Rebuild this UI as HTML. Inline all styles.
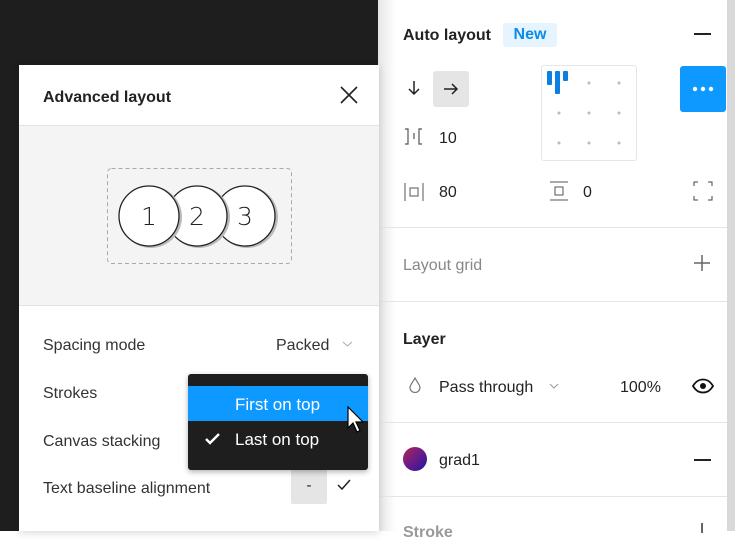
<!DOCTYPE html>
<html><head><meta charset="utf-8"><style>
*{box-sizing:border-box;margin:0;padding:0}
body{width:735px;height:531px;overflow:hidden;position:relative;background:#fff;font-family:"Liberation Sans",sans-serif;color:#222}
.abs{position:absolute}
.t{position:absolute;font-size:16px;white-space:nowrap;margin-top:2px}
.b{font-weight:bold}
.hr{position:absolute;left:378px;width:349px;height:1px;background:#e5e5e5}
</style></head><body>
<div class="abs" style="left:0;top:0;width:378px;height:531px;background:#1e1e1e"></div>
<div class="abs" style="left:378px;top:0;width:18px;height:531px;background:linear-gradient(90deg,#e6e6e6,#fff)"></div>
<div class="abs" style="left:727px;top:0;width:8px;height:531px;background:#d9d9d9"></div>

<!-- right panel -->
<div class="t b" style="left:403px;top:25px;font-size:16px">Auto layout</div>
<div class="abs" style="left:503px;top:23px;width:54px;height:24px;background:#e5f4ff;border-radius:3px;color:#0d8ce9;font-weight:bold;font-size:16px;text-align:center;line-height:24px">New</div>
<div class="abs" style="left:694px;top:33px;width:17px;height:1.5px;background:#222"></div>
<svg class="abs" style="left:407px;top:80px" width="14" height="16" stroke="#222" fill="none" stroke-width="1.5"><path d="M7 1v13M2 9l5 5 5-5"/></svg>
<div class="abs" style="left:433px;top:71px;width:36px;height:36px;background:#e5e5e5;border-radius:3px"></div>
<svg class="abs" style="left:443px;top:82px" width="16" height="14" stroke="#222" fill="none" stroke-width="1.5"><path d="M1 7h13M9 2l5 5-5 5"/></svg>
<div class="abs" style="left:541px;top:65px;width:96px;height:96px;border:1px solid #e5e5e5;border-radius:3px">
<div class="abs" style="left:5px;top:5px;width:5px;height:14px;background:#0d7fe0;border-radius:1px"></div>
<div class="abs" style="left:13px;top:5px;width:5px;height:23px;background:#0d7fe0;border-radius:1px"></div>
<div class="abs" style="left:21px;top:5px;width:5px;height:10px;background:#0d7fe0;border-radius:1px"></div>
<svg class="abs" style="left:0;top:0" width="96" height="96" fill="#bbb"><circle cx="47" cy="17" r="1.5"/><circle cx="77" cy="17" r="1.5"/><circle cx="17" cy="47" r="1.5"/><circle cx="47" cy="47" r="1.5"/><circle cx="77" cy="47" r="1.5"/><circle cx="17" cy="77" r="1.5"/><circle cx="47" cy="77" r="1.5"/><circle cx="77" cy="77" r="1.5"/></svg>
</div>
<div class="abs" style="left:680px;top:66px;width:46px;height:46px;background:#0d99ff;border-radius:3px"><svg width="46" height="46" fill="#fff"><circle cx="15" cy="23" r="2.2"/><circle cx="23" cy="23" r="2.2"/><circle cx="31" cy="23" r="2.2"/></svg></div>
<svg class="abs" style="left:404px;top:128px" width="20" height="18" stroke="#555" fill="none" stroke-width="1.2"><path d="M1 1h3v15H1M10 5v6M18 1h-3v15h3"/></svg>
<div class="t" style="left:439px;top:128px">10</div>
<svg class="abs" style="left:404px;top:182px" width="20" height="20" stroke="#555" fill="none"><path d="M1 1v18M19 1v18M6 6h8v8H6z"/></svg>
<div class="t" style="left:439px;top:182px">80</div>
<svg class="abs" style="left:549px;top:181px" width="20" height="20" stroke="#555" fill="none"><path d="M1 1h18M1 19h18M6 6h8v8H6z"/></svg>
<div class="t" style="left:583px;top:182px">0</div>
<svg class="abs" style="left:693px;top:181px" width="20" height="20" stroke="#444" fill="none"><path d="M1 5V1h4M15 1h4v4M19 15v4h-4M5 19H1v-4"/></svg>
<div class="hr" style="top:227px"></div>
<div class="t" style="left:403px;top:255px;color:#888">Layout grid</div>
<svg class="abs" style="left:693px;top:254px" width="18" height="18" stroke="#666" stroke-width="1.5"><path d="M9 1v16M1 9h16"/></svg>
<div class="hr" style="top:301px"></div>
<div class="t b" style="left:403px;top:329px">Layer</div>
<svg class="abs" style="left:409px;top:377px" width="12" height="16" stroke="#777" fill="none" stroke-width="1.2"><path d="M6 1C4 5 1 8 1 10.5a5 5 0 0 0 10 0C11 8 8 5 6 1z"/></svg>
<div class="t" style="left:439px;top:377px">Pass through</div>
<svg class="abs" style="left:549px;top:382px" width="10" height="8" stroke="#999" fill="none"><path d="M1 2l4 4 4-4"/></svg>
<div class="t" style="left:620px;top:377px">100%</div>
<svg class="abs" style="left:692px;top:378px" width="22" height="16"><path d="M1 8C4 3 7 1.5 11 1.5S18 3 21 8C18 13 15 14.5 11 14.5S4 13 1 8z" fill="none" stroke="#111" stroke-width="1.8"/><circle cx="11" cy="8" r="3" fill="#111"/></svg>
<div class="hr" style="top:422px"></div>
<div class="abs" style="left:403px;top:447px;width:24px;height:24px;border-radius:50%;background:linear-gradient(135deg,#b3264f,#6a1c8a 50%,#1a1a9a)"></div>
<div class="t" style="left:439px;top:450px">grad1</div>
<div class="abs" style="left:694px;top:459px;width:17px;height:1.5px;background:#222"></div>
<div class="hr" style="top:496px"></div>
<div class="t b" style="left:403px;top:522px;color:#999">Stroke</div>
<div class="abs" style="left:701px;top:523px;width:1.5px;height:10px;background:#666"></div>

<!-- modal -->
<div class="abs" style="left:19px;top:65px;width:360px;height:466px;background:#fff;box-shadow:0 2px 8px rgba(0,0,0,.15)">
<div class="t b" style="left:24px;top:22px;font-size:16px">Advanced layout</div>
<svg class="abs" style="left:321px;top:21px" width="18" height="18" stroke="#222" stroke-width="1.6"><path d="M1 1l16 16M17 1L1 17"/></svg>
<div class="abs" style="left:0;top:60px;width:360px;height:181px;background:#f4f4f4;border-top:1px solid #e3e3e3;border-bottom:1px solid #e3e3e3"></div>
<div class="t" style="left:24px;top:270px;color:#333">Spacing mode</div>
<div class="t" style="left:257px;top:270px;color:#333">Packed</div>
<svg class="abs" style="left:323px;top:275px" width="11" height="8" stroke="#aaa" fill="none"><path d="M1 2l4.5 4 4.5-4"/></svg>
<div class="t" style="left:24px;top:318px;color:#333">Strokes</div>
<div class="t" style="left:24px;top:366px;color:#333">Canvas stacking</div>
<div class="t" style="left:24px;top:413px;color:#333">Text baseline alignment</div>
<div class="abs" style="left:272px;top:403px;width:36px;height:36px;background:#e5e5e5;border-radius:2px;text-align:center;line-height:36px;font-size:15px">-</div>
<svg class="abs" style="left:318px;top:414px" width="14" height="12" stroke="#222" fill="none" stroke-width="1.5"><path d="M1 6l4 4 8-9"/></svg>
</div>
<svg class="abs" style="left:107px;top:168px" width="186" height="97"><rect x="0.5" y="0.5" width="184" height="95" rx="4" fill="none" stroke="#aaa" stroke-dasharray="4 3"/>
<g stroke="#222" stroke-width="1.3" fill="#fff">
<circle cx="140" cy="49" r="31" fill="#bbb" stroke="none"/><circle cx="138" cy="48" r="30"/>
<circle cx="92" cy="49" r="31" fill="#bbb" stroke="none"/><circle cx="90" cy="48" r="30"/>
<circle cx="44" cy="49" r="31" fill="#bbb" stroke="none"/><circle cx="42" cy="48" r="30"/>
</g>
<g fill="#222" font-family="DejaVu Sans" font-weight="200" font-size="25" text-anchor="middle"><text x="42" y="57">1</text><text x="90" y="57">2</text><text x="138" y="57">3</text></g></svg>

<!-- dropdown -->
<div class="abs" style="left:188px;top:374px;width:180px;height:96px;background:#1e1e1e;border-radius:3px;box-shadow:0 2px 6px rgba(0,0,0,.3)">
<div class="abs" style="left:0;top:12px;width:180px;height:35px;background:#0d99ff"></div>
<div class="t" style="left:47px;top:19px;color:#fff;font-size:17px">First on top</div>
<div class="t" style="left:47px;top:54px;color:#fff;font-size:17px">Last on top</div>
<svg class="abs" style="left:17px;top:59px" width="15" height="12" stroke="#fff" fill="none" stroke-width="2.4"><path d="M1 6l4 4 9-9"/></svg>
</div>
<svg class="abs" style="left:347px;top:406px" width="20" height="30"><path d="M1 1v21l5-5 4 9 3-1.5-4-8.5h7z" fill="#fff" stroke="#000" stroke-width="1.2"/></svg>
</body></html>
